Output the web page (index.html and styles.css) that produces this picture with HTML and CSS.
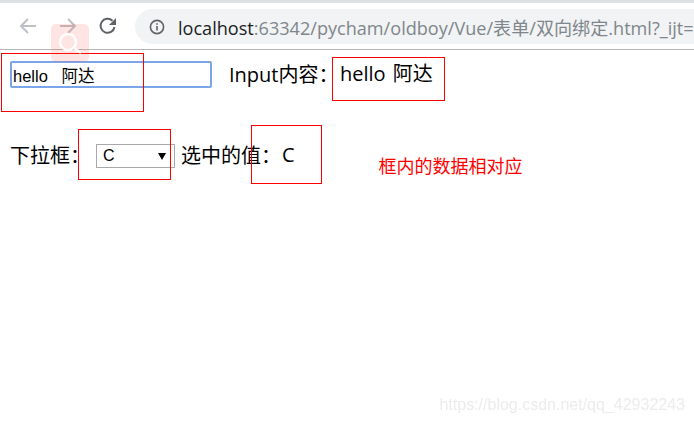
FILE: index.html
```html
<!DOCTYPE html>
<html lang="zh-CN">
<head>
<meta charset="utf-8">
<title>双向绑定</title>
<link rel="stylesheet" href="styles.css">
</head>
<body>
<header class="chrome">
  <div class="toolbar">
    <svg class="nav nav-off" viewBox="0 0 20 20"><path d="M18 10H3M10 3l-7 7 7 7"/></svg>
    <svg class="nav nav-off" viewBox="0 0 20 20"><path d="M2 10h15M10 3l7 7-7 7"/></svg>
    <svg class="nav nav-on" viewBox="0 0 20 20"><path d="M16.5 11a7 7 0 1 1-2-6.2"/><path class="fill" d="M18 2v7h-7z"/></svg>
    <div class="omnibox">
      <svg class="info" viewBox="0 0 16 16"><circle cx="8" cy="8" r="6.6"/><path d="M8 7v4.6M8 4.2v1.6"/></svg>
      <span class="url"><span class="host">localhost</span>:63342/pycham/oldboy/Vue/表单/双向绑定.html?_ijt=</span>
    </div>
  </div>
</header>
<main class="page">
  <div class="row row-one">
    <input class="text-input" type="text" value="hello   阿达">
    <span class="label label-input">Input内容：</span>
    <span class="value value-text">hello 阿达</span>
  </div>
  <div class="row row-two">
    <span class="label label-select">下拉框：</span>
    <span class="select-wrap">
      <select class="picker"><option>A</option><option>B</option><option selected>C</option></select>
    </span>
    <span class="label label-picked">选中的值：</span>
    <span class="value">C</span>
    <span class="note">框内的数据相对应</span>
  </div>
</main>
<div class="mark box-a"></div>
<div class="mark box-b"></div>
<div class="mark box-c"></div>
<div class="mark box-d"></div>
<div class="search-badge">
  <svg viewBox="0 0 38 38"><circle cx="17" cy="18" r="8"/><path d="M23 24l7 5"/></svg>
</div>
<div class="watermark">https://blog.csdn.net/qq_42932243</div>
</body>
</html>
```

FILE: styles.css
```css
* { box-sizing: border-box; }
html, body { margin: 0; height: 100%; }
body {
  position: relative;
  width: 694px;
  height: 424px;
  overflow: hidden;
  background: #fff;
  color: #000;
  font-family: "Open Sans", "Noto Sans CJK SC", sans-serif;
}
.chrome {
  height: 50px;
  border-top: 3px solid #dee1e6;
  border-bottom: 1px solid #b6b6b6;
  background: #fff;
}
.toolbar {
  display: flex;
  align-items: center;
  height: 46px;
  padding: 0 0 0 18px;
  overflow: hidden;
}
.nav { width: 20px; height: 20px; flex: none; margin-right: 20px; fill: none; stroke-width: 2; }
.nav-off { stroke: #bdc1c6; }
.nav-on { stroke: #5f6368; margin-right: 17px; }
.nav-on .fill { fill: #5f6368; stroke: none; }
.omnibox {
  display: flex;
  align-items: center;
  flex: none;
  width: 620px;
  height: 35px;
  margin-top: 1px;
  padding-left: 14px;
  border-radius: 18px;
  background: #f1f3f4;
  white-space: nowrap;
}
.info { width: 16px; height: 16px; flex: none; margin-right: 13px; fill: none; stroke: #5f6368; stroke-width: 1.6; }
.url { font-size: 18.1px; color: #80868b; }
.host { color: #202124; }
.row { display: flex; white-space: nowrap; padding-left: 10px; }
.row-one { align-items: center; height: 49px; }
.row-two { align-items: center; height: 40px; margin-top: 37px; }
.text-input {
  width: 202px;
  height: 27px;
  margin: 0;
  padding: 0 1px;
  border: 2px solid #7aa5e8;
  border-radius: 2px;
  outline: none;
  font: 16.5px "Liberation Sans", "Noto Sans CJK SC", sans-serif;
  color: #000;
}
.label { font-size: 20px; line-height: 26px; }
.label-input { margin-left: 17px; width: 111px; }
.label-select { width: 86px; }
.value { font-size: 20px; line-height: 26px; margin-top: -2px; }
.value-text { word-spacing: 2px; }
.select-wrap { position: relative; display: block; width: 79px; height: 24px; }
.select-wrap::after {
  content: "";
  position: absolute;
  right: 9px;
  top: 9px;
  border-top: 7px solid #000;
  border-left: 4px solid transparent;
  border-right: 4px solid transparent;
}
.picker {
  appearance: none;
  display: block;
  width: 100%;
  height: 100%;
  margin: 0;
  padding: 0 0 2px 6px;
  border: 1px solid #a9a9a9;
  background: #fff;
  border-radius: 0;
  font: 16px "Liberation Sans", sans-serif;
  color: #000;
}
.label-picked { margin-left: 6px; width: 101px; }
.note { margin-left: 84px; margin-top: 20px; font-size: 18px; line-height: 24px; color: #ff0000; }
.mark { position: absolute; border: 1px solid #f00; pointer-events: none; }
.box-a { left: 1px; top: 53px; width: 143px; height: 59px; }
.box-b { left: 332px; top: 57px; width: 113px; height: 44px; }
.box-c { left: 78px; top: 129px; width: 93px; height: 51px; }
.box-d { left: 251px; top: 125px; width: 71px; height: 59px; }
.search-badge {
  position: absolute;
  left: 51px;
  top: 24px;
  width: 38px;
  height: 38px;
  border-radius: 5px;
  background: rgba(255, 90, 90, 0.16);
}
.search-badge svg { display: block; width: 38px; height: 38px; fill: none; stroke: rgba(255,255,255,.9); stroke-width: 2.5; }
.watermark {
  position: absolute;
  right: 9px;
  top: 396px;
  font-family: "Liberation Sans", sans-serif;
  font-size: 16px;
  color: #ececec;
  filter: blur(.5px);
}
```
